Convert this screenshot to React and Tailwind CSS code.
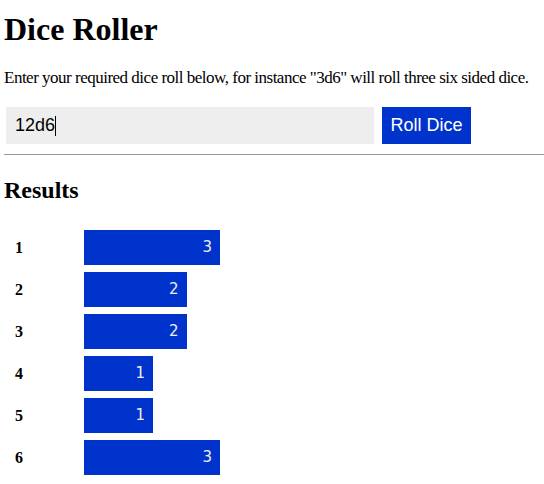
import React from 'react';

const results = [
  { face: 1, count: 3 },
  { face: 2, count: 2 },
  { face: 3, count: 2 },
  { face: 4, count: 1 },
  { face: 5, count: 1 },
  { face: 6, count: 3 },
];

const ResultRow = ({ face, count }) => {
  const width = 69 + (count - 1) * 33.5;
  return (
    <div className="flex items-center h-[35px]">
      <div className="w-[80px] pl-[11px] font-bold text-[16px]">{face}</div>
      <div
        className="h-[35px] bg-[#0033cc] flex items-center justify-end pr-[8px] text-[15px] text-[#eeeeee] font-['DejaVu_Sans',sans-serif]"
        style={{ width }}
      >
        {count}
      </div>
    </div>
  );
};

const App = () => {
  return (
    <div className="min-h-[484px] bg-white text-black pl-[4px] font-['Liberation_Serif',serif]">
      <h1 className="pt-[11px] text-[32px] leading-[36px] font-bold">Dice Roller</h1>
      <p className="mt-[22px] text-[17px] leading-[18px] tracking-[-0.5px] whitespace-nowrap">
        Enter your required dice roll below, for instance "3d6" will roll three six sided dice.
      </p>
      <div className="mt-[20px] ml-[2px] flex gap-[8px] font-['Liberation_Sans',sans-serif] text-[18px]">
        <div className="w-[368px] h-[37px] bg-[#eeeeee] flex items-center pl-[9px]">
          <span>12d6</span>
          <span className="w-px h-[20px] bg-black" />
        </div>
        <button className="w-[89px] h-[37px] bg-[#0033cc] text-white flex items-center justify-center">
          Roll Dice
        </button>
      </div>
      <hr className="mt-[10px] border-t border-[#9a9a9a]" />
      <h2 className="mt-[21px] text-[24px] leading-[28px] font-bold">Results</h2>
      <div className="mt-[26px] flex flex-col gap-[7px]">
        {results.map((r) => (
          <ResultRow key={r.face} face={r.face} count={r.count} />
        ))}
      </div>
    </div>
  );
};

export default App;
